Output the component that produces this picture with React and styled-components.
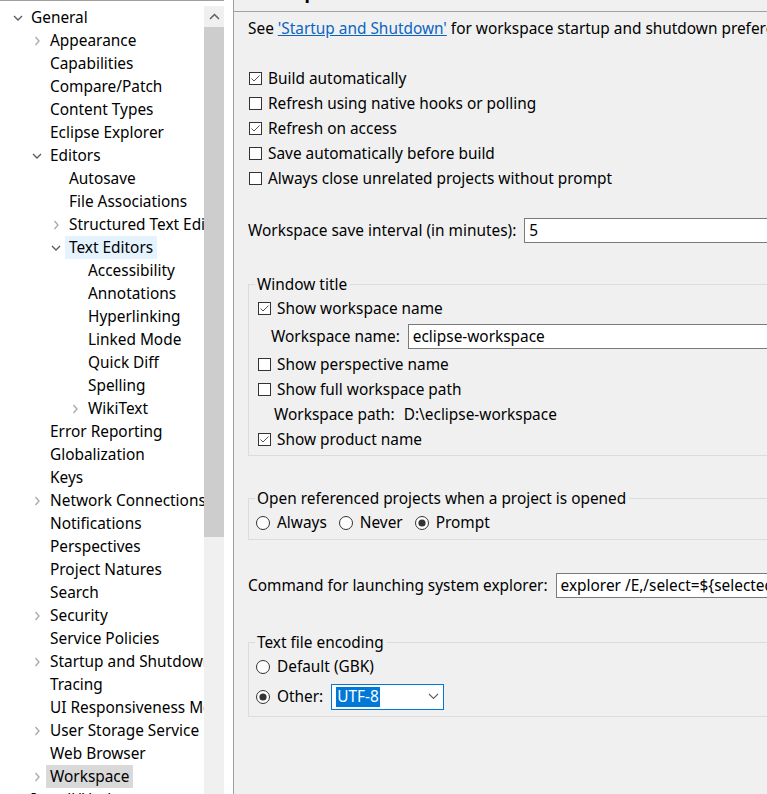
import React from 'react';
import styled, { createGlobalStyle } from 'styled-components';

const Global = createGlobalStyle`
  html, body { margin: 0; padding: 0; background: #f0f0f0; overflow: hidden; }
  body { font-family: "Noto Sans", "Open Sans", sans-serif; font-size: 15.4px; color: #000; }
  * { box-sizing: border-box; }
`;

const Window = styled.div`
  display: flex;
  width: 767px;
  height: 794px;
  overflow: hidden;
`;

const LeftPane = styled.div`
  flex: 0 0 234px;
  background: #fff;
  border-right: 1px solid #a0a0a0;
  display: flex;
  flex-direction: column;
`;

const TreeFrame = styled.div`
  width: 224px;
  flex: 1;
  min-height: 0;
  border-top: 1px solid #a0a0a0;
  display: flex;
`;

const Tree = styled.ul`
  list-style: none;
  margin: 0;
  padding: 5px 0 0;
  width: 204px;
  flex: 0 0 204px;
  overflow: hidden;
`;

const Row = styled.li`
  display: flex;
  align-items: center;
  height: 23px;
  padding-left: ${p => 10 + 19 * p.$level}px;
  white-space: nowrap;
`;

const Twisty = styled.span`
  flex: 0 0 16px;
  height: 23px;
  display: flex;
  align-items: center;
  justify-content: center;
`;

const Label = styled.span`
  margin-left: 1px;
  padding: 0 4px;
  height: 23px;
  line-height: 23px;
  background: ${p => (p.$sel === 'focus' ? '#e5f3ff' : p.$sel === 'gray' ? '#d9d9d9' : 'transparent')};
`;

const ScrollBar = styled.div`
  flex: 0 0 20px;
  margin-top: 5px;
  background: #f0f0f0;
  display: flex;
  flex-direction: column;
`;

const ScrollBtn = styled.div`
  height: 21px;
  display: flex;
  align-items: center;
  justify-content: center;
`;

const Thumb = styled.div`
  height: 510px;
  background: #cdcdcd;
`;

const RightPane = styled.div`
  flex: 0 0 620px;
  display: flex;
  flex-direction: column;
`;

const Header = styled.div`
  height: 12px;
  border-bottom: 1px solid #a0a0a0;
  overflow: hidden;
  padding-left: 14px;
`;

const Title = styled.div`
  font-weight: bold;
  font-size: 18px;
  line-height: 18px;
  margin-top: -17px;
`;

const Content = styled.div`
  padding: 5px 0 0 14px;
  display: flex;
  flex-direction: column;
`;

const TextLine = styled.div`
  height: 23px;
  line-height: 23px;
  white-space: nowrap;
`;

const Link = styled.a`
  color: #0a64c2;
  text-decoration: underline;
`;

const CheckList = styled.div`
  margin-top: 26px;
  display: flex;
  flex-direction: column;
`;

const OptionRow = styled.label`
  display: flex;
  align-items: center;
  height: ${p => p.$h || 25}px;
  white-space: nowrap;
  gap: ${p => p.$gap || 6}px;
  padding-left: ${p => p.$indent || 0}px;
`;

const BoxSvg = styled.svg`
  flex: 0 0 auto;
  margin-left: 1px;
`;

const FieldRow = styled.div`
  display: flex;
  align-items: center;
  height: ${p => p.$h || 25}px;
  margin-top: ${p => p.$mt || 0}px;
  padding-left: ${p => p.$indent || 0}px;
  gap: ${p => p.$gap || 8}px;
  white-space: nowrap;
`;

const Field = styled.div`
  flex: 1;
  height: 25px;
  background: #fff;
  border: 1px solid #7a7a7a;
  padding-left: 4px;
  line-height: 23px;
  white-space: nowrap;
  overflow: hidden;
`;

const Group = styled.fieldset`
  margin: ${p => p.$mt}px 0 0;
  min-width: 0;
  border: 1px solid #dcdcdc;
  padding: 0 8px ${p => p.$pb}px 8px;
  display: flex;
  flex-direction: column;
`;

const Legend = styled.legend`
  padding: 0 3px 0 2px;
  margin-left: -2px;
  line-height: 23px;
  height: 23px;
`;

const RadioLine = styled.div`
  display: flex;
  align-items: center;
  gap: 12px;
  height: ${p => p.$h || 25}px;
  margin-left: -1px;
`;

const Combo = styled.div`
  width: 113px;
  height: 26px;
  margin-left: -4px;
  background: #fff;
  border: 1px solid #0078d7;
  display: flex;
  align-items: center;
  justify-content: space-between;
  padding: 0 4px 0 4px;
`;

const ComboText = styled.span`
  background: #0078d7;
  color: #fff;
  line-height: 20px;
  padding: 0 1px;
`;

const Chevron = ({ dir, color }) => {
  if (dir === 'down')
    return (
      <svg width="10" height="8" viewBox="0 0 10 8">
        <polyline points="1,2 5,6 9,2" fill="none" stroke={color} strokeWidth="1.3" />
      </svg>
    );
  return (
    <svg width="8" height="10" viewBox="0 0 8 10">
      <polyline points="2.5,1 6,5 2.5,9" fill="none" stroke={color} strokeWidth="1.3" />
    </svg>
  );
};

const CheckBox = ({ checked }) => (
  <BoxSvg width="13" height="13" viewBox="0 0 13 13">
    <rect x="0.5" y="0.5" width="12" height="12" fill="#fff" stroke="#333" />
    {checked && <polyline points="2.5,6.5 5,9 10.5,3.5" fill="none" stroke="#555" strokeWidth="1" />}
  </BoxSvg>
);

const Radio = ({ checked }) => (
  <svg width="14" height="14" viewBox="0 0 14 14" style={{ flex: '0 0 auto' }}>
    <circle cx="7" cy="7" r="6.5" fill="#fff" stroke="#333" />
    {checked && <circle cx="7" cy="7" r="3.6" fill="#333" />}
  </svg>
);

const treeItems = [
  [0, 'General', 'open'],
  [1, 'Appearance', 'closed'],
  [1, 'Capabilities'],
  [1, 'Compare/Patch'],
  [1, 'Content Types'],
  [1, 'Eclipse Explorer'],
  [1, 'Editors', 'open'],
  [2, 'Autosave'],
  [2, 'File Associations'],
  [2, 'Structured Text Editors', 'closed'],
  [2, 'Text Editors', 'open', 'focus'],
  [3, 'Accessibility'],
  [3, 'Annotations'],
  [3, 'Hyperlinking'],
  [3, 'Linked Mode'],
  [3, 'Quick Diff'],
  [3, 'Spelling'],
  [3, 'WikiText', 'closed'],
  [1, 'Error Reporting'],
  [1, 'Globalization'],
  [1, 'Keys'],
  [1, 'Network Connections', 'closed'],
  [1, 'Notifications'],
  [1, 'Perspectives'],
  [1, 'Project Natures'],
  [1, 'Search'],
  [1, 'Security', 'closed'],
  [1, 'Service Policies'],
  [1, 'Startup and Shutdown', 'closed'],
  [1, 'Tracing'],
  [1, 'UI Responsiveness Monitoring'],
  [1, 'User Storage Service', 'closed'],
  [1, 'Web Browser'],
  [1, 'Workspace', 'closed', 'gray'],
  [0, 'Install/Update', 'closed'],
];

export default function App() {
  return (
    <>
      <Global />
      <Window>
        <LeftPane>
          <TreeFrame>
            <Tree>
              {treeItems.map(([level, text, state, sel]) => (
                <Row key={text} $level={level}>
                  <Twisty>
                    {state === 'open' && <Chevron dir="down" color="#5a5a5a" />}
                    {state === 'closed' && <Chevron dir="right" color="#a8a8a8" />}
                  </Twisty>
                  <Label $sel={sel}>{text}</Label>
                </Row>
              ))}
            </Tree>
            <ScrollBar>
              <ScrollBtn>
                <svg width="11" height="7" viewBox="0 0 11 7">
                  <polyline points="1,6 5.5,1.5 10,6" fill="none" stroke="#606060" strokeWidth="1.5" />
                </svg>
              </ScrollBtn>
              <Thumb />
            </ScrollBar>
          </TreeFrame>
        </LeftPane>

        <RightPane>
          <Header>
            <Title>Workspace</Title>
          </Header>
          <Content>
            <TextLine>
              See <Link>'Startup and Shutdown'</Link> for workspace startup and shutdown preferences.
            </TextLine>

            <CheckList>
              <OptionRow><CheckBox checked />Build automatically</OptionRow>
              <OptionRow><CheckBox />Refresh using native hooks or polling</OptionRow>
              <OptionRow><CheckBox checked />Refresh on access</OptionRow>
              <OptionRow><CheckBox />Save automatically before build</OptionRow>
              <OptionRow><CheckBox />Always close unrelated projects without prompt</OptionRow>
            </CheckList>

            <FieldRow $mt={27}>
              Workspace save interval (in minutes):
              <Field>5</Field>
            </FieldRow>

            <Group $mt={30} $pb={3}>
              <Legend>Window title</Legend>
              <OptionRow><CheckBox checked />Show workspace name</OptionRow>
              <FieldRow $h={31} $indent={14} $gap={8}>
                Workspace name:
                <Field>eclipse-workspace</Field>
              </FieldRow>
              <OptionRow><CheckBox />Show perspective name</OptionRow>
              <OptionRow><CheckBox />Show full workspace path</OptionRow>
              <FieldRow $indent={17} $gap={9}>
                Workspace path:
                <span>D:\eclipse-workspace</span>
              </FieldRow>
              <OptionRow><CheckBox checked />Show product name</OptionRow>
            </Group>

            <Group $mt={31} $pb={4}>
              <Legend>Open referenced projects when a project is opened</Legend>
              <RadioLine>
                <OptionRow $gap={7}><Radio />Always</OptionRow>
                <OptionRow $gap={7}><Radio />Never</OptionRow>
                <OptionRow $gap={7}><Radio checked />Prompt</OptionRow>
              </RadioLine>
            </Group>

            <FieldRow $mt={33}>
              Command for launching system explorer:
              <Field>explorer /E,/select=${'{'}selected_resource_loc{'}'}</Field>
            </FieldRow>

            <Group $mt={33} $pb={2}>
              <Legend>Text file encoding</Legend>
              <RadioLine>
                <OptionRow $gap={7}><Radio />Default (GBK)</OptionRow>
              </RadioLine>
              <RadioLine $h={35}>
                <OptionRow $gap={7}><Radio checked />Other:</OptionRow>
                <Combo>
                  <ComboText>UTF-8</ComboText>
                  <svg width="11" height="7" viewBox="0 0 11 7">
                    <polyline points="1,1 5.5,5.5 10,1" fill="none" stroke="#606060" strokeWidth="1.1" />
                  </svg>
                </Combo>
              </RadioLine>
            </Group>
          </Content>
        </RightPane>
      </Window>
    </>
  );
}
